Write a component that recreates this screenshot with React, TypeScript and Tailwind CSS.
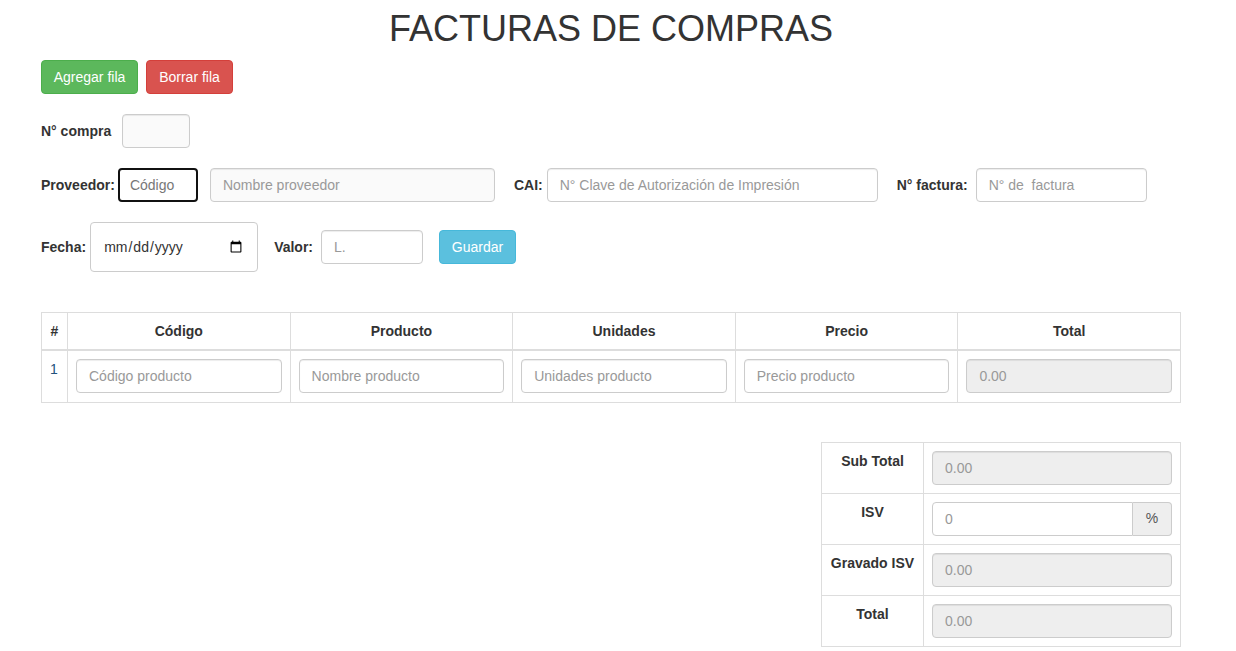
import React from 'react';

// Facturas de compras — formulario estilo Bootstrap 3

const input =
  'h-[34px] rounded-[4px] border border-[#ccc] px-3 text-[14px] text-[#555] placeholder:text-[#999] outline-none shadow-[inset_0_1px_1px_rgba(0,0,0,0.075)]';
const disabled = 'bg-[#eee] cursor-not-allowed';

export default function App() {
  return (
    <div className="min-h-screen bg-white px-[41px] text-[14px] text-[#333] font-['Liberation_Sans',Arial,sans-serif]">
      <div className="w-[1140px]">
        {/* Title */}
        <h1 className="pt-[9px] text-center text-[36px] leading-[40px] font-normal">FACTURAS DE COMPRAS</h1>

        {/* Buttons */}
        <div className="mt-[11px] flex gap-2">
          <button className="h-[34px] w-[97px] rounded-[4px] border border-[#4cae4c] bg-[#5cb85c] text-white">
            Agregar fila
          </button>
          <button className="h-[34px] w-[87px] rounded-[4px] border border-[#d43f3a] bg-[#d9534f] text-white">
            Borrar fila
          </button>
        </div>

        {/* N° compra */}
        <div className="mt-[20px] flex items-center">
          <label className="font-bold">N° compra</label>
          <input className={`${input} ml-[11px] w-[68px] bg-[#fafafa]`} />
        </div>

        {/* Proveedor / CAI / factura */}
        <div className="mt-[20px] flex items-center">
          <label className="font-bold">Proveedor:</label>
          <input
            className="ml-[3px] h-[34px] w-[80px] rounded-[4px] border-2 border-[#111] px-[10px] text-[14px] placeholder:text-[#777] outline-none"
            placeholder="Código"
          />
          <input className={`${input} ml-[12px] w-[285px] bg-[#fafafa]`} placeholder="Nombre proveedor" />
          <label className="ml-[19px] font-bold">CAI:</label>
          <input className={`${input} ml-[4px] w-[331px] bg-white`} placeholder="N° Clave de Autorización de Impresión" />
          <label className="ml-[19px] font-bold">N° factura:</label>
          <input className={`${input} ml-[8px] w-[171px] bg-white`} placeholder="N° de  factura" />
        </div>

        {/* Fecha / Valor */}
        <div className="mt-[20px] flex items-center">
          <label className="font-bold">Fecha:</label>
          <input
            type="date"
            className="ml-[4px] h-[50px] w-[168px] rounded-[4px] border border-[#ccc] px-3 text-[14px] text-[#333] outline-none"
          />
          <label className="ml-[16px] font-bold">Valor:</label>
          <input className={`${input} ml-[8px] w-[102px] bg-white`} placeholder="L." />
          <button className="ml-[16px] h-[34px] w-[77px] rounded-[4px] border border-[#46b8da] bg-[#5bc0de] text-white">
            Guardar
          </button>
        </div>

        {/* Product table */}
        <table className="mt-[40px] w-full table-fixed border-collapse border border-[#ddd]">
          <colgroup>
            <col className="w-[26px]" />
            <col />
            <col />
            <col />
            <col />
            <col />
          </colgroup>
          <thead>
            <tr>
              {['#', 'Código', 'Producto', 'Unidades', 'Precio', 'Total'].map((h) => (
                <th
                  key={h}
                  className="h-[37px] border border-b-2 border-[#ddd] px-2 text-center font-bold leading-[20px]"
                >
                  {h}
                </th>
              ))}
            </tr>
          </thead>
          <tbody>
            <tr>
              <td className="border border-[#ddd] p-2 pb-[9px] align-top text-[#23527c]">1</td>
              {['Código producto', 'Nombre producto', 'Unidades producto', 'Precio producto'].map((p) => (
                <td key={p} className="border border-[#ddd] p-2 pb-[9px]">
                  <input className={`${input} w-full bg-white`} placeholder={p} />
                </td>
              ))}
              <td className="border border-[#ddd] p-2 pb-[9px]">
                <input className={`${input} ${disabled} w-full`} placeholder="0.00" disabled />
              </td>
            </tr>
          </tbody>
        </table>

        {/* Totals */}
        <table className="mt-[39px] ml-auto w-[360px] table-fixed border-collapse border border-[#ddd]">
          <colgroup>
            <col className="w-[102px]" />
            <col />
          </colgroup>
          <tbody>
            {['Sub Total', 'ISV', 'Gravado ISV', 'Total'].map((l) => (
              <tr key={l}>
                <th className="border border-[#ddd] p-2 align-top text-center font-bold leading-[20px]">{l}</th>
                <td className="border border-[#ddd] p-2">
                  {l === 'ISV' ? (
                    <div className="flex">
                      <input
                        className="h-[34px] min-w-0 flex-1 rounded-l-[4px] border border-[#ccc] bg-white px-3 text-[14px] placeholder:text-[#999] outline-none"
                        placeholder="0"
                      />
                      <span className="flex h-[34px] w-[39px] items-center justify-center rounded-r-[4px] border border-l-0 border-[#ccc] bg-[#eee] text-[#555]">
                        %
                      </span>
                    </div>
                  ) : (
                    <input className={`${input} ${disabled} w-full`} placeholder="0.00" disabled />
                  )}
                </td>
              </tr>
            ))}
          </tbody>
        </table>
      </div>
    </div>
  );
}
